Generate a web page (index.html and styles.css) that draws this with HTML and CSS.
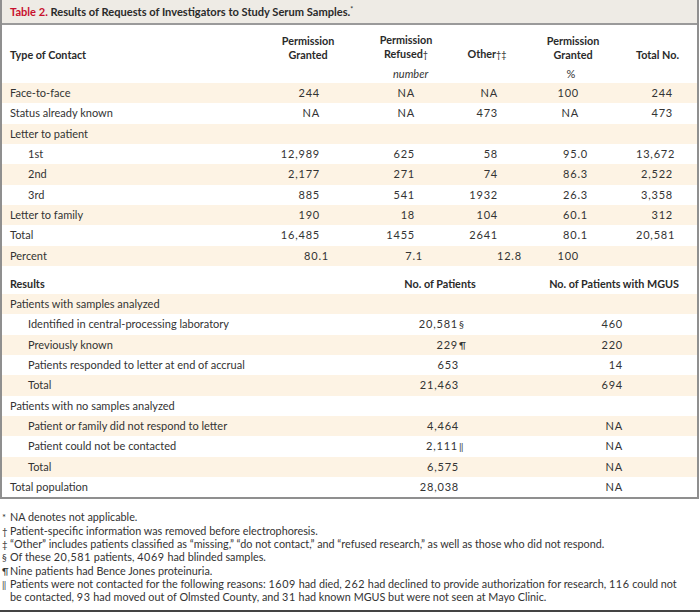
FILE: index.html
```html
<!DOCTYPE html>
<html lang="en">
<head>
<meta charset="utf-8">
<title>Table 2</title>
<link rel="stylesheet" href="styles.css">
</head>
<body>
<div class="box">
  <div class="title"><span class="tnum">Table 2.</span> Results of Requests of Investigators to Study Serum Samples.<sup class="ast">*</sup></div>
  <table class="t1">
    <colgroup><col class="w1"><col class="w2"><col class="w3"><col class="w4"><col class="w5"><col class="w6"></colgroup>
    <thead>
      <tr class="hrow">
        <th class="lab">Type of Contact</th>
        <th class="h2">Permission<br>Granted</th>
        <th class="h3">Permission<br>Refused<span class="fn">†</span></th>
        <th class="h4">Other<span class="fn">†‡</span></th>
        <th class="h5">Permission<br>Granted</th>
        <th class="h6">Total No.</th>
      </tr>
      <tr class="unit">
        <th></th><th></th><th class="u3"><em>number</em></th><th></th><th class="u5">%</th><th></th>
      </tr>
    </thead>
    <tbody>
      <tr class="sh"><td class="lab">Face-to-face</td><td>244</td><td>NA</td><td>NA</td><td class="pi">100</td><td>244</td></tr>
      <tr><td class="lab">Status already known</td><td>NA</td><td>NA</td><td>473</td><td class="pi">NA</td><td>473</td></tr>
      <tr class="sh"><td class="lab">Letter to patient</td><td></td><td></td><td></td><td></td><td></td></tr>
      <tr><td class="lab sub">1st</td><td>12,989</td><td>625</td><td>58</td><td>95.0</td><td>13,672</td></tr>
      <tr class="sh"><td class="lab sub">2nd</td><td>2,177</td><td>271</td><td>74</td><td>86.3</td><td>2,522</td></tr>
      <tr><td class="lab sub">3rd</td><td>885</td><td>541</td><td>1932</td><td>26.3</td><td>3,358</td></tr>
      <tr class="sh"><td class="lab">Letter to family</td><td>190</td><td>18</td><td>104</td><td>60.1</td><td>312</td></tr>
      <tr><td class="lab">Total</td><td>16,485</td><td>1455</td><td>2641</td><td>80.1</td><td>20,581</td></tr>
      <tr class="sh pct"><td class="lab">Percent</td><td>80.1</td><td>7.1</td><td>12.8</td><td class="pi">100</td><td></td></tr>
    </tbody>
  </table>
  <table class="t2">
    <colgroup><col class="v1"><col class="v2"><col class="v3"></colgroup>
    <thead>
      <tr><th class="lab">Results</th><th class="g2">No. of Patients</th><th class="g3">No. of Patients with MGUS</th></tr>
    </thead>
    <tbody>
      <tr class="sh"><td class="lab">Patients with samples analyzed</td><td></td><td></td></tr>
      <tr><td class="lab sub">Identified in central-processing laboratory</td><td>20,581<span class="hang">§</span></td><td>460</td></tr>
      <tr class="sh"><td class="lab sub">Previously known</td><td>229<span class="hang">¶</span></td><td>220</td></tr>
      <tr><td class="lab sub">Patients responded to letter at end of accrual</td><td>653</td><td>14</td></tr>
      <tr class="sh"><td class="lab sub">Total</td><td>21,463</td><td>694</td></tr>
      <tr><td class="lab">Patients with no samples analyzed</td><td></td><td></td></tr>
      <tr class="sh"><td class="lab sub">Patient or family did not respond to letter</td><td>4,464</td><td>NA</td></tr>
      <tr><td class="lab sub">Patient could not be contacted</td><td>2,111<span class="hang">‖</span></td><td>NA</td></tr>
      <tr class="sh"><td class="lab sub">Total</td><td>6,575</td><td>NA</td></tr>
      <tr><td class="lab">Total population</td><td>28,038</td><td>NA</td></tr>
    </tbody>
  </table>
</div>
<div class="notes">
  <p><span class="sym">*</span>NA denotes not applicable.</p>
  <p><span class="sym">†</span>Patient-specific information was removed before electrophoresis.</p>
  <p><span class="sym">‡</span>“Other” includes patients classified as “missing,” “do not contact,” and “refused research,” as well as those who did not respond.</p>
  <p><span class="sym">§</span>Of these <span class="n">20,581</span> patients, <span class="n">4069</span> had blinded samples.</p>
  <p><span class="sym">¶</span>Nine patients had Bence Jones proteinuria.</p>
  <p><span class="sym">‖</span>Patients were not contacted for the following reasons: <span class="n">1609</span> had died, <span class="n">262</span> had declined to provide authorization for research, <span class="n">116</span> could not be contacted, <span class="n">93</span> had moved out of Olmsted County, and <span class="n">31</span> had known MGUS but were not seen at Mayo Clinic.</p>
</div>
</body>
</html>
```

FILE: styles.css
```css
* { box-sizing: border-box; }
html, body { margin: 0; padding: 0; background: #fff; }
body {
  width: 700px;
  font-family: Lato, "Open Sans", sans-serif;
  font-size: 11px;
  color: #333;
}
.box {
  width: 699px;
  border-left: 2px solid #8f8f8f;
  border-right: 2px solid #8f8f8f;
  border-bottom: 2px solid #8f8f8f;
}
.title {
  height: 25px;
  background: #eeebe5;
  border-bottom: 2px solid #9a9a9a;
  padding: 5px 0 0 8px;
  font-weight: bold;
  font-size: 11.1px;
  color: #2a2a2a;
  line-height: 14px;
}
.tnum { color: #c8102e; }
.ast { font-size: 7px; font-weight: normal; vertical-align: top; line-height: 8px; }
table {
  border-collapse: collapse;
  table-layout: fixed;
  width: 695px;
}
th, td { padding: 0; white-space: nowrap; }
th { font-weight: bold; color: #2a2a2a; font-size: 10.8px; }
td { text-align: right; line-height: 14px; letter-spacing: 0.8px; }
td.lab { letter-spacing: 0; }
tbody tr { height: 20.33px; }
tr.sh { background: #fdf3e4; }
.lab { text-align: left; padding-left: 8px; }
.sub { padding-left: 26px; }

/* table 1 columns */
.w1 { width: 266px; }
.w2 { width: 80px; }
.w3 { width: 116px; }
.w4 { width: 46px; }
.w5 { width: 126px; }
.w6 { width: 61px; }
.hrow th {
  vertical-align: bottom;
  line-height: 13.5px;
  padding-top: 8px;
  padding-bottom: 3px;
  text-align: center;
}
.hrow th.lab { text-align: left; }
.hrow th.h6 { text-align: right; padding-right: 21px; }
.unit { height: 19px; }
.unit th { font-weight: normal; color: #333; font-size: 11px; }
.unit .u3 { text-align: left; padding-left: 45px; }
.unit .u3 em { font-style: italic; }
.unit .u5 { text-align: center; padding-right: 4px; }
.fn { font-weight: normal; font-size: 9px; }

.t1 td:nth-child(2) { padding-right: 28px; }
.t1 td:nth-child(3) { padding-right: 49px; }
.t1 td:nth-child(4) { padding-right: 12px; }
.t1 td:nth-child(5) { padding-right: 48px; }
.t1 td.pi { padding-right: 57px; }
.t1 td:nth-child(6) { padding-right: 24px; }
.t1 tr.pct td:nth-child(2) { padding-right: 19px; }
.t1 tr.pct td:nth-child(3) { padding-right: 41px; }
.t1 tr.pct td:nth-child(4) { text-align: left; padding-left: 33px; padding-right: 0; }

/* table 2 */
.t2 { margin-top: 8px; }
.t2 thead tr { height: 20px; }
.v1 { width: 378px; }
.v2 { width: 120px; }
.v3 { width: 197px; }
.t2 th { text-align: left; vertical-align: middle; }
.t2 th.g2 { text-align: center; }
.t2 th.g3 { text-align: right; padding-right: 18px; }
.t2 td:nth-child(2) { padding-right: 41px; }
.t2 td:nth-child(3) { padding-right: 74px; }
.hang {
  display: inline-block;
  width: 0;
  overflow: visible;
  font-size: 10px;
  letter-spacing: 0;
  padding-left: 1px;
}

/* notes */
.notes {
  margin-top: 11px;
  padding: 0 12px 6px 0;
  border-bottom: 2px solid #444;
  font-size: 10.8px;
  line-height: 13.33px;
}
.notes p {
  margin: 0;
  padding-left: 10px;
  text-indent: -8px;
}
.sym {
  display: inline-block;
  width: 8px;
  text-indent: 0;
  font-size: 9.5px;
  line-height: 10px;
}
.n { letter-spacing: 0.6px; }
```
